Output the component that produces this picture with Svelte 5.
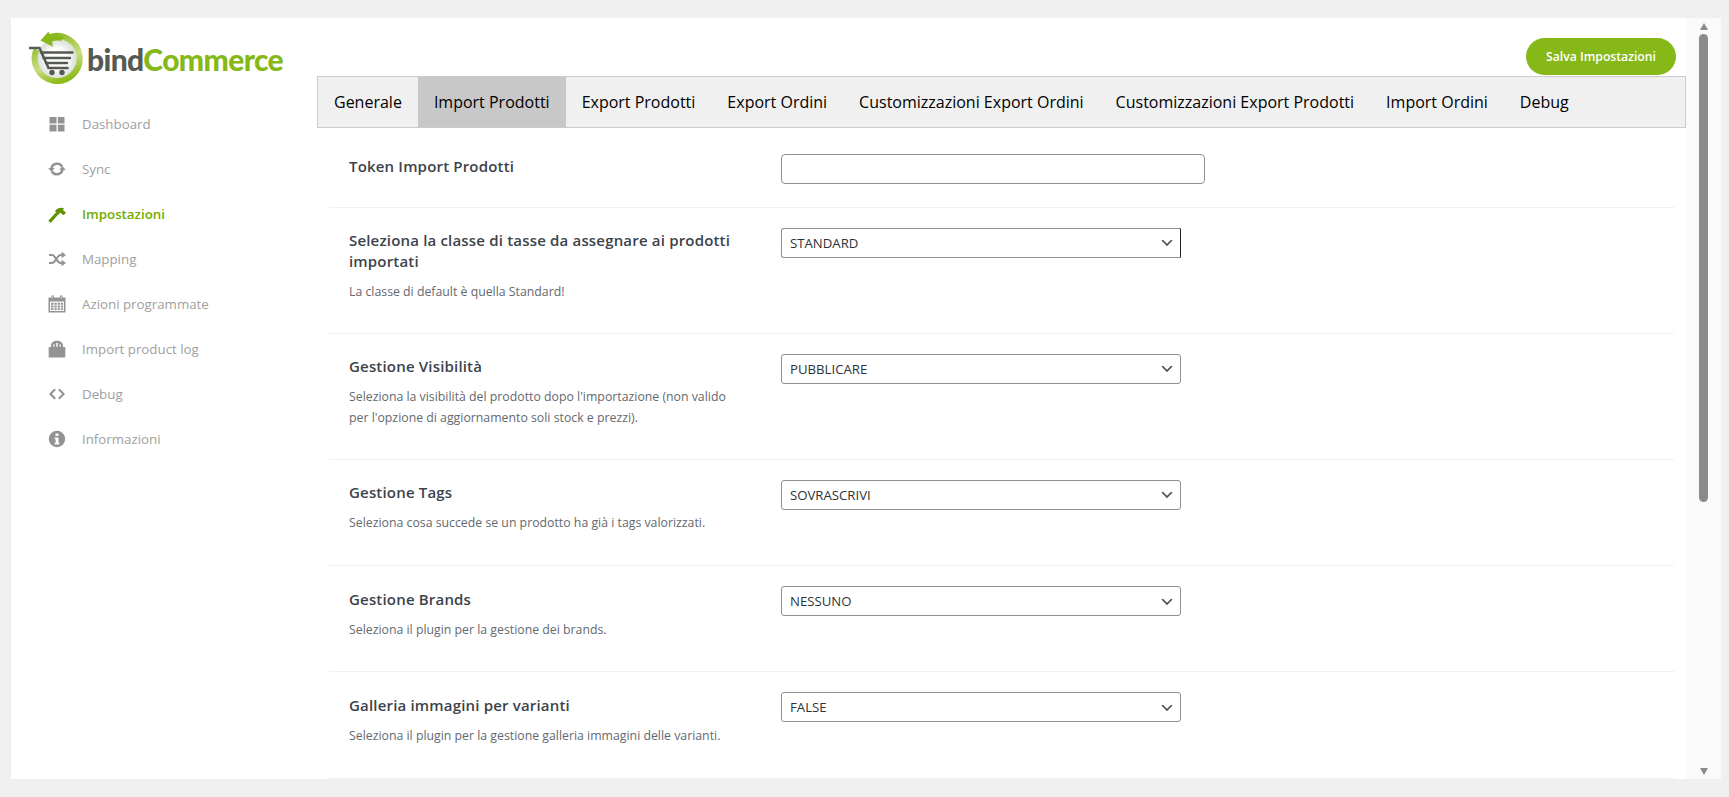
<script>
	const menu = [
		{ label: 'Dashboard', icon: 'grid' },
		{ label: 'Sync', icon: 'sync' },
		{ label: 'Impostazioni', icon: 'hammer', active: true },
		{ label: 'Mapping', icon: 'shuffle' },
		{ label: 'Azioni programmate', icon: 'calendar' },
		{ label: 'Import product log', icon: 'bag' },
		{ label: 'Debug', icon: 'code' },
		{ label: 'Informazioni', icon: 'info' }
	];

	const tabs = [
		'Generale',
		'Import Prodotti',
		'Export Prodotti',
		'Export Ordini',
		'Customizzazioni Export Ordini',
		'Customizzazioni Export Prodotti',
		'Import Ordini',
		'Debug'
	];

	const rows = [
		{ title: 'Token Import Prodotti', input: true },
		{
			title: 'Seleziona la classe di tasse da assegnare ai prodotti importati',
			desc: 'La classe di default è quella Standard!',
			value: 'STANDARD',
			focused: true
		},
		{
			title: 'Gestione Visibilità',
			desc: "Seleziona la visibilità del prodotto dopo l'importazione (non valido per l'opzione di aggiornamento soli stock e prezzi).",
			value: 'PUBBLICARE'
		},
		{
			title: 'Gestione Tags',
			desc: 'Seleziona cosa succede se un prodotto ha già i tags valorizzati.',
			value: 'SOVRASCRIVI'
		},
		{
			title: 'Gestione Brands',
			desc: 'Seleziona il plugin per la gestione dei brands.',
			value: 'NESSUNO'
		},
		{
			title: 'Galleria immagini per varianti',
			desc: 'Seleziona il plugin per la gestione galleria immagini delle varianti.',
			value: 'FALSE'
		}
	];
</script>

<div class="page">
	<div class="card">
		<aside class="sidebar">
			<div class="logo">
				<svg class="logo-mark" viewBox="0 0 56 56" width="56" height="56">
					<defs>
						<linearGradient id="ring" x1="0.2" y1="0" x2="0.6" y2="1">
							<stop offset="0" stop-color="#86b817" />
							<stop offset="0.6" stop-color="#c9dd82" />
							<stop offset="1" stop-color="#8dbb1a" />
						</linearGradient>
						<radialGradient id="disc" cx="0.5" cy="0.5" r="0.55">
							<stop offset="0.45" stop-color="#ffffff" />
							<stop offset="1" stop-color="#d2d5cf" />
						</radialGradient>
					</defs>
					<circle cx="28" cy="28" r="20" fill="url(#disc)" />
					<path d="M20 6.500A22.500 22.500 0 1 1 7.500 18.500" fill="none" stroke="url(#ring)" stroke-width="6" />
					<path d="M19.300.7 11.500 9.500 24 15.700 23 10.500c3-1 6-1.200 9-.5l3-4c-4-1.500-8-1.500-12.500-.5z" fill="#86b817" />
					<g fill="none" stroke="#555a52" stroke-linecap="round">
						<path d="M1 17h9.500l9 20h19" stroke-width="2.600" />
						<path d="M12 21.500h31.500" stroke-width="2.400" />
						<path d="M14.500 27h26.500" stroke-width="2.400" />
						<path d="M17 32h21" stroke-width="2.400" />
					</g>
					<circle cx="23" cy="41.500" r="2.700" fill="#555a52" />
					<circle cx="33" cy="41.500" r="2.700" fill="#555a52" />
				</svg>
				<span class="logo-text"><span class="bind">bind</span><span class="commerce">Commerce</span></span>
			</div>
			<nav class="menu">
				{#each menu as item}
					<div class="menu-item" class:active={item.active}>
						<svg class="menu-icon" viewBox="0 0 18 18" width="18" height="18" fill="currentColor">
							{#if item.icon === 'grid'}
								<path d="M1.500 2h7v6.500h-7zM9.800 2h6.700v6.500H9.800zM1.500 9.800h7v6.700h-7zM9.800 9.800h6.700v6.700H9.800z" />
							{:else if item.icon === 'sync'}
								<path d="M3.500 8.500A5.700 5.700 0 0 1 14 6.500M14.500 9.500A5.700 5.700 0 0 1 4 11.500" fill="none" stroke="currentColor" stroke-width="2.500" />
								<path d="M.3 8h6.400L3.500 12zM11.300 10h6.400L14.500 6z" />
							{:else if item.icon === 'hammer'}
								<path d="M1.500 16.800 9.500 8" fill="none" stroke="currentColor" stroke-width="3.200" />
								<path d="M7 6C9.500 3 13 2 16.200 3.300L14.800 4.800 18 7.800 15.500 10.300 12.500 7.800 10.300 9.500z" />
							{:else if item.icon === 'shuffle'}
								<path d="M1 5h3c3.500 0 5 8 8.500 8H14M1 13h3c3.500 0 5-8 8.500-8H14" fill="none" stroke="currentColor" stroke-width="2.200" />
								<path d="M13.500 1.800 18 5 13.500 8.200zM13.500 9.800 18 13 13.500 16.200z" />
							{:else if item.icon === 'calendar'}
								<path fill-rule="evenodd" d="M3.500 2.500V1.500a1.200 1.200 0 0 1 2.400 0v1h6.200v-1a1.200 1.200 0 0 1 2.400 0v1H17.500v15H.5v-15zM4.500 1.200v2.600h.4V1.200zM13.100 1.200v2.600h.4V1.200zM2 6.500v9.500h14V6.500zM3 7.700h2.500v2H3zM6.400 7.700h2.300v2H6.400zM9.600 7.700h2.300v2H9.600zM12.800 7.700h2.300v2h-2.300zM3 10.500h2.500v2H3zM6.400 10.500h2.300v2H6.400zM9.600 10.500h2.300v2H9.600zM12.800 10.500h2.300v2h-2.300zM3 13.300h2.500v1.800H3zM6.400 13.300h2.300v1.800H6.400zM9.600 13.300h2.300v1.800H9.600zM12.800 13.300h2.300v1.800h-2.300z" />
							{:else if item.icon === 'bag'}
								<path fill-rule="evenodd" d="M.7 7H3V5.500C3 2.500 5.500 .7 9 .7s6 1.800 6 4.800V7h2.300v10.500H.7zM5.200 6.800h1.200V3.800C5.700 4.100 5.200 4.700 5.200 5.500zM8.300 6.800h1.400V2.900a6 6 0 0 0-1.400 0zM11.600 6.800h1.200V5.500c0-.8-.5-1.400-1.200-1.700z" />
							{:else if item.icon === 'code'}
								<path d="M6.400 3.500 7.900 5 3.900 9l4 4-1.500 1.500L1 9zM11.600 3.500 17 9l-5.400 5.500-1.500-1.500 4-4-4-4z" />
							{:else}
								<path fill-rule="evenodd" d="M9 .8a8.200 8.200 0 1 1 0 16.400A8.200 8.200 0 0 1 9 .8zM7.500 3.500v2.500h3V3.500zM6.700 7.500v1.700h.9v3.600h-.9v1.700h4.600v-1.700h-.8V7.500z" />
							{/if}
						</svg>
						<span>{item.label}</span>
					</div>
				{/each}
			</nav>
		</aside>

		<main class="main">
			<div class="actions">
				<button class="save">Salva Impostazioni</button>
			</div>
			<div class="tabs">
				{#each tabs as tab, i}
					<div class="tab" class:current={i === 1}>{tab}</div>
				{/each}
			</div>
			<div class="rows">
				{#each rows as row}
					<div class="row">
						<div class="info" class:described={row.desc}>
							<div class="title">{row.title}</div>
							{#if row.desc}
								<p class="desc">{row.desc}</p>
							{/if}
						</div>
						<div class="field">
							{#if row.input}
								<input type="text" class="text-input" />
							{:else}
								<select class="select" class:focused={row.focused}>
									<option>{row.value}</option>
								</select>
							{/if}
						</div>
					</div>
				{/each}
			</div>
		</main>

		<div class="scrollbar">
			<span class="arrow up"></span>
			<span class="thumb"></span>
			<span class="track"></span>
			<span class="arrow down"></span>
		</div>
	</div>
</div>

<style>
	:global(body) {
		margin: 0;
		background: #f0f0f0;
		overflow: hidden;
	}

	.page {
		height: 797px;
		box-sizing: border-box;
		padding: 18px 8px 18px 11px;
		font-family: 'Open Sans', 'Noto Sans', sans-serif;
	}

	.card {
		display: flex;
		height: 100%;
		background: #fff;
		overflow: hidden;
	}

	.sidebar {
		flex: 0 0 306px;
	}

	.logo {
		display: flex;
		align-items: center;
		padding: 14px 0 0 18px;
		height: 53px;
	}

	.logo-text {
		font-family: 'Lato', sans-serif;
		font-weight: 900;
		font-size: 30px;
		letter-spacing: -0.630px;
		margin-left: 2px;
	}

	.bind {
		color: #555a52;
	}

	.commerce {
		color: #86b817;
	}

	.menu {
		display: flex;
		flex-direction: column;
		margin-top: 16px;
		padding-left: 37px;
	}

	.menu-item {
		display: flex;
		align-items: center;
		gap: 16px;
		height: 45px;
		font-size: 13.300px;
		color: #a0a0a0;
	}

	.menu-icon {
		color: #939393;
		flex: none;
	}

	.menu-item.active {
		color: #74ac00;
		font-weight: 600;
	}

	.menu-item.active .menu-icon {
		color: #5f9400;
	}

	.main {
		flex: 0 0 1369px;
		min-width: 0;
	}

	.actions {
		display: flex;
		justify-content: flex-end;
		padding: 20px 10px 1px 0;
	}

	.save {
		width: 150px;
		height: 37px;
		border: 0;
		border-radius: 19px;
		background: #86b817;
		color: #fff;
		font-family: inherit;
		font-size: 12.200px;
		font-weight: 600;
	}

	.tabs {
		display: flex;
		box-sizing: border-box;
		height: 52px;
		background: #f0f0f0;
		border: 1px solid #ccc;
	}

	.tab {
		padding: 0 16px;
		font-size: 16px;
		line-height: 50px;
		color: #000;
		white-space: nowrap;
	}

	.tab.current {
		background: #c8c8c8;
	}

	.rows {
		margin: 5px 12px 0;
	}

	.row {
		display: flex;
		border-bottom: 1px solid #f0f0f0;
		padding-left: 20px;
	}

	.info {
		box-sizing: border-box;
		flex: 0 0 432px;
		padding: 22.500px 42px 30px 0;
	}

	.info.described {
		min-height: 105.300px;
	}

	.title {
		font-size: 15px;
		letter-spacing: 0.180px;
		font-weight: 600;
		line-height: 21px;
		color: #3c434a;
	}

	.desc {
		margin: 10px 0 0;
		font-size: 12.300px;
		line-height: 20.750px;
		color: #646970;
	}

	.field {
		padding-top: 20px;
	}

	.text-input {
		display: block;
		box-sizing: border-box;
		width: 424px;
		height: 30px;
		margin-top: 1px;
		border: 1px solid #8c8f94;
		border-radius: 4px;
		background: #fff;
	}

	.select {
		display: block;
		box-sizing: border-box;
		width: 400px;
		height: 30px;
		padding: 0 24px 0 8px;
		border: 1px solid #8c8f94;
		border-radius: 3px;
		appearance: none;
		font-family: inherit;
		font-size: 13.200px;
		color: #2c3338;
		background: #fff url('data:image/svg+xml;charset=utf-8,%3Csvg xmlns="http://www.w3.org/2000/svg" width="20" height="20"%3E%3Cpath d="M5 6l5 5 5-5 2 1-7 7-7-7 2-1z" fill="%23555"/%3E%3C/svg%3E') no-repeat right 5px top 55%;
		background-size: 16px 16px;
	}

	.select.focused {
		border-right-color: #1d2327;
		border-radius: 3px 0 0 3px;
	}

	.scrollbar {
		display: flex;
		flex-direction: column;
		align-items: center;
		flex: 1;
		background: #fafafa;
	}

	.thumb {
		width: 9px;
		height: 468px;
		margin-top: 4px;
		border-radius: 5px;
		background: #8b8b8b;
	}

	.track {
		flex: 1;
	}

	.arrow {
		width: 0;
		height: 0;
		border-left: 4.500px solid transparent;
		border-right: 4.500px solid transparent;
	}

	.arrow.up {
		margin-top: 5px;
		border-bottom: 7px solid #8b8b8b;
	}

	.arrow.down {
		margin-bottom: 4px;
		border-top: 7px solid #8b8b8b;
	}
</style>
